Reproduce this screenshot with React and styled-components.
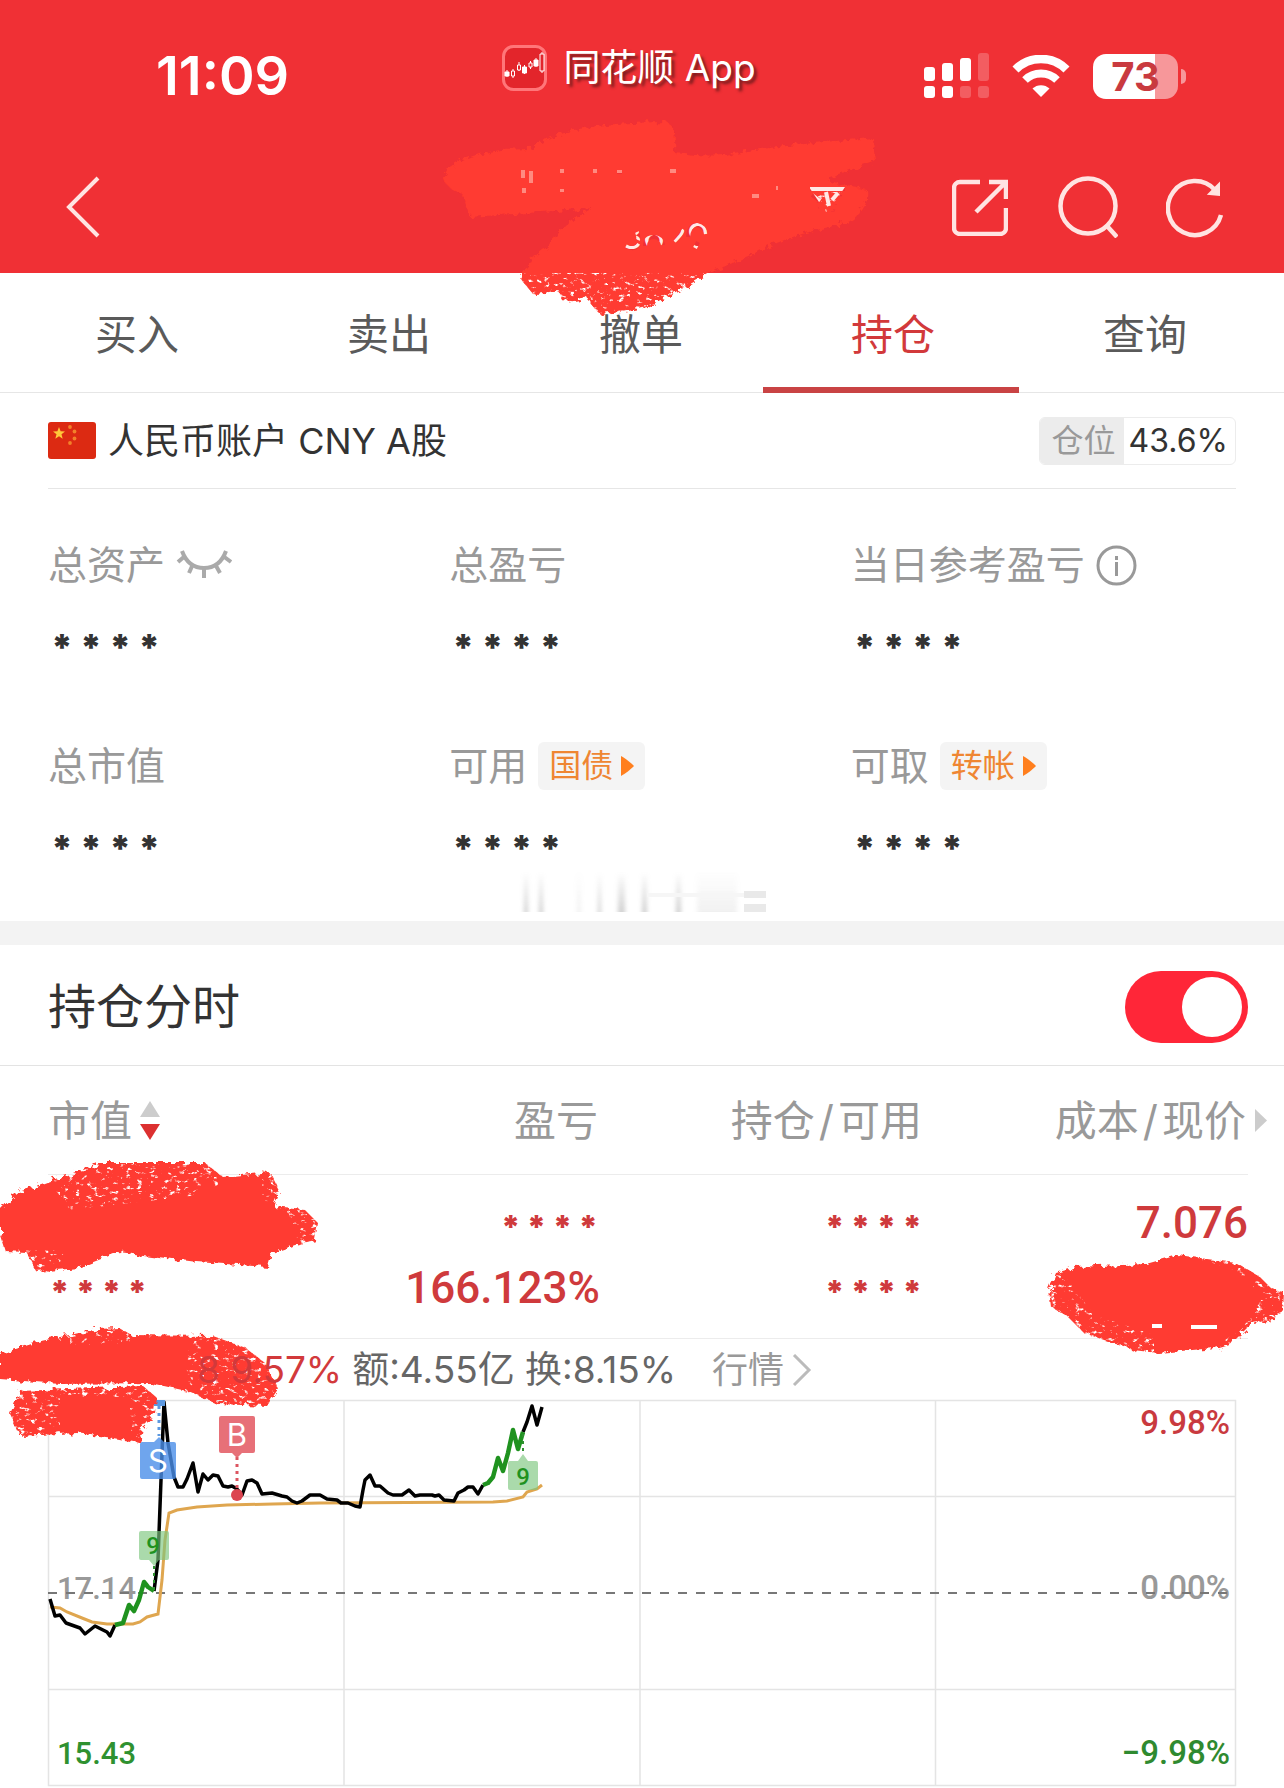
import React from 'react';
import styled, { createGlobalStyle } from 'styled-components';

const GlobalStyle = createGlobalStyle`
  * {
    box-sizing: border-box;
  }

  body {
    margin: 0;
    background: #fff;
    color: #333;
    font-family: Inter, 'Noto Sans CJK SC', sans-serif;
    overflow-x: hidden;
  }

  button {
    margin: 0;
    padding: 0;
    border: 0;
    background: none;
    color: inherit;
    font: inherit;
    cursor: pointer;
  }

  svg {
    display: block;
    flex: none;
  }
`;

const Page = styled.div`
  position: relative;
  width: 100%;
  overflow: hidden;
`;

const Header = styled.header`
  position: relative;
  background: #f03035;
  color: #fff;
`;

const StatusBar = styled.div`
  display: grid;
  grid-template-columns: 1fr auto 1fr;
  align-items: center;
  height: 152px;
  padding: 0 98px;
`;

const Time = styled.span`
  padding-left: 58px;
  font-size: 54px;
  font-weight: 600;
  line-height: 64px;
`;

const AppName = styled.span`
  display: flex;
  align-items: center;
  gap: 16px;
  padding: 0 26px 16px 0;
  font-size: 37px;
  line-height: 48px;
  text-shadow: 3px 3px 3px rgba(70, 20, 20, 0.7);
`;

const StatusIcons = styled.span`
  display: flex;
  align-items: center;
  justify-content: flex-end;
  gap: 23px;
`;

const Battery = styled.span`
  position: relative;
  width: 85px;
  height: 45px;
  margin-right: 8px;
  border-radius: 13px;
  background: linear-gradient(90deg, #fff 73%, #f7979a 73%);
  color: #c93a3f;
  font-size: 40px;
  font-weight: 700;
  line-height: 45px;
  text-align: center;

  &::after {
    content: '';
    position: absolute;
    top: 15px;
    right: -8px;
    width: 5px;
    height: 15px;
    border-radius: 0 5px 5px 0;
    background: #f7979a;
  }
`;

const NavBar = styled.div`
  display: flex;
  align-items: center;
  justify-content: space-between;
  height: 121px;
  padding: 0 60px 12px;
`;

const NavActions = styled.div`
  display: flex;
  align-items: center;
  gap: 48px;
`;

const Tabs = styled.nav`
  display: flex;
  height: 120px;
  padding: 0 13px 0 11px;
  border-bottom: 1px solid #e6e6e6;
`;

const Tab = styled.button`
  position: relative;
  flex: 1;
  padding-top: 4px;
  color: ${(props) => (props.$active ? '#d2393b' : '#5a5a5a')};
  font-size: 42px;
  line-height: 60px;

  &::after {
    content: '';
    position: absolute;
    right: 0;
    bottom: -1px;
    left: -4px;
    height: 6px;
    background: ${(props) => (props.$active ? '#c94344' : 'none')};
  }
`;

const AccountRow = styled.div`
  display: flex;
  align-items: center;
  gap: 12px;
  height: 96px;
  margin: 0 48px;
  border-bottom: 1px solid #e6e6e6;
  font-size: 36px;
  line-height: 48px;
`;

const Position = styled.span`
  display: flex;
  margin-left: auto;
  overflow: hidden;
  border: 1px solid #ececec;
  border-radius: 6px;
  font-size: 32px;
  line-height: 46px;
`;

const PositionLabel = styled.span`
  padding: 0 8px 0 12px;
  background: #ececec;
  color: #999;
`;

const PositionValue = styled.span`
  padding: 0 7px 0 5px;
`;

const Summary = styled.dl`
  display: grid;
  grid-template-columns: repeat(3, 1fr);
  row-gap: 48px;
  margin: 0;
  padding: 52px 32px 26px 48px;
`;

const SummaryItem = styled.div`
  height: 153px;
`;

const SummaryLabel = styled.dt`
  display: flex;
  align-items: center;
  gap: 11px;
  height: 48px;
  color: #999;
  font-size: 39px;
  line-height: 48px;
  white-space: nowrap;
`;

const SummaryValue = styled.dd`
  margin: 30px 0 0 3px;
  color: #333;
  font-size: 36px;
  font-weight: 900;
  line-height: 56px;
`;

const Shortcut = styled.button`
  display: flex;
  align-items: center;
  gap: 8px;
  height: 48px;
  padding: 0 11px;
  border-radius: 6px;
  background: #f4f4f4;
  color: #ef8632;
  font-size: 32px;
`;

const Ghost = styled.svg`
  position: absolute;
  top: 872px;
  left: calc(50% - 125px);
`;

const Divider = styled.div`
  height: 24px;
  background: #f3f3f3;
`;

const SectionHead = styled.label`
  display: flex;
  align-items: center;
  justify-content: space-between;
  height: 121px;
  padding: 3px 36px 0 48px;
  border-bottom: 1px solid #e3e3e3;
  font-size: 48px;
  line-height: 60px;
`;

const Switch = styled.input`
  appearance: none;
  position: relative;
  width: 123px;
  height: 72px;
  margin: 0;
  border-radius: 36px;
  background: #ff2638;

  &::after {
    content: '';
    position: absolute;
    top: 6px;
    right: 6px;
    width: 60px;
    height: 60px;
    border-radius: 50%;
    background: #fff;
  }
`;

const Holdings = styled.section`
  position: relative;
  padding: 0 36px 0 48px;
`;

const Table = styled.table`
  width: 100%;
  table-layout: fixed;
  border-collapse: collapse;
`;

const Th = styled.th`
  position: relative;
  width: ${(props) => props.$width};
  height: 108px;
  padding: 3px 2px 0 0;
  border-bottom: 1px solid #ececec;
  color: #999;
  font-size: 42px;
  font-weight: 400;
  line-height: 60px;
  text-align: ${(props) => props.$align || 'right'};
  white-space: nowrap;
`;

const Slash = styled.span`
  margin: 0 4px;
`;

const SortButton = styled.button`
  display: flex;
  align-items: center;
  gap: 8px;
`;

const MoreArrow = styled.svg`
  position: absolute;
  top: 43px;
  right: -19px;
`;

const Td = styled.td`
  height: ${(props) => (props.$last ? 88 : 76)}px;
  padding: ${(props) => (props.$last ? '0 0 12px' : '20px 0 0')};
  border-bottom: ${(props) => (props.$last ? '1px solid #ececec' : 'none')};
  color: #cf3a3c;
  font-family: Roboto, sans-serif;
  font-size: 44px;
  font-weight: 500;
  line-height: 56px;
  text-align: ${(props) => props.$align || 'right'};
`;

const Masked = styled.span`
  display: block;
  padding: 8px 2px 0;
  font-family: Inter, sans-serif;
  font-size: 32px;
  font-weight: 900;
  line-height: 48px;
`;

const Quote = styled.div`
  display: flex;
  align-items: center;
  gap: 10px;
  height: 61px;
  padding-left: 149px;
  color: #666;
  font-size: 37px;
  line-height: 48px;
  white-space: nowrap;
`;

const Rise = styled.span`
  position: relative;
  z-index: 2;
  color: #d2393b;
`;

const QuoteLink = styled.a`
  display: flex;
  align-items: center;
  gap: 8px;
  margin-left: 26px;
  color: #999;
  font-size: 36px;
  text-decoration: none;
`;

const Chart = styled.svg`
  width: calc(100% - 12px);
  height: auto;
  overflow: visible;
  font-family: Roboto, sans-serif;
`;

const Brush = styled.svg`
  position: absolute;
  top: ${(props) => props.$top}px;
  left: ${(props) => props.$left || 'auto'};
  right: ${(props) => props.$right || 'auto'};
  z-index: 1;
  overflow: visible;
  pointer-events: none;
`;

const MASK = '* * * *';

const Scribble = ({
  id,
  width,
  height,
  top,
  left,
  right,
  d,
  specks,
  holes,
  children,
}) => (
  <Brush
    $top={top}
    $left={left}
    $right={right}
    width={width}
    height={height}
    viewBox={`0 0 ${width} ${height}`}
    aria-hidden="true"
  >
    <defs>
      <filter id={`${id}-edge`} x="-5%" y="-10%" width="110%" height="120%">
        <feTurbulence type="fractalNoise" baseFrequency="0.16" numOctaves="3" />
        <feDisplacementMap in="SourceGraphic" scale="9" />
      </filter>
      <filter id={`${id}-grain`}>
        <feTurbulence
          type="fractalNoise"
          baseFrequency="0.16 0.26"
          numOctaves="4"
          seed="4"
        />
        <feColorMatrix values="0 0 0 0 0  0 0 0 0 0  0 0 0 0 0  0 0 0 6 -3.6" />
        <feComposite in2="SourceGraphic" operator="in" />
      </filter>
      <mask id={`${id}-mask`} maskUnits="userSpaceOnUse" x="-20" y="-20" width={width + 40} height={height + 40}>
        <rect x="-20" y="-20" width={width + 40} height={height + 40} fill="#fff" />
        <path d={specks} filter={`url(#${id}-grain)`} />
        {holes && <path d={holes} fill="none" stroke="#000" strokeWidth="4" />}
      </mask>
    </defs>
    {children}
    <g mask={`url(#${id}-mask)`}>
      <path d={d} fill="#ff3a30" filter={`url(#${id}-edge)`} />
    </g>
  </Brush>
);

const LogoIcon = () => (
  <svg width="45" height="46" viewBox="0 0 45 46" fill="none">
    <rect x="1.5" y="1.5" width="42" height="43" rx="10" fill="#e3252b" stroke="#ff7679" strokeWidth="3" />
    <g stroke="#fff" strokeWidth="1">
      <path d="M5 25v7M11 24v9M17 17v9M22.500 20v9M28.500 16v8M34 13v9M40 7v21" />
      <path fill="#fff" d="M3 27h4v4H3zM20.500 22h4v6h-4zM32 15h4v6h-4z" />
      <path fill="#e3252b" d="M9.500 26h3v5h-3zM15.500 20h3v5h-3zM27 18h3v4h-3zM38 9h4v17h-4z" />
    </g>
  </svg>
);

const SignalIcon = () => (
  <svg width="65" height="46" viewBox="0 0 65 46" fill="#fff">
    <rect y="14" width="11" height="14" rx="3" />
    <rect x="18" y="10" width="11" height="18" rx="3" />
    <rect x="36" y="5" width="11" height="23" rx="3" />
    <rect x="54" width="11" height="28" rx="3" opacity=".22" />
    <rect y="33" width="11" height="12" rx="3" />
    <rect x="18" y="33" width="11" height="12" rx="3" />
    <rect x="36" y="33" width="11" height="12" rx="3" opacity=".22" />
    <rect x="54" y="33" width="11" height="12" rx="3" opacity=".22" />
  </svg>
);

const WifiIcon = () => (
  <svg width="58" height="43" viewBox="0 0 58 43" fill="none">
    <path d="M3.500 14.500a36 36 0 0 1 51 0" stroke="#fff" strokeWidth="8.500" />
    <path d="M13 25a23 23 0 0 1 32 0" stroke="#fff" strokeWidth="8" />
    <path d="M29 42l-8.500-8.500a12.500 12.500 0 0 1 17 0z" fill="#fff" />
  </svg>
);

const BackIcon = () => (
  <svg width="46" height="62" viewBox="0 0 46 62" fill="none" stroke="#ffe4e2" strokeWidth="4">
    <path d="M38 2L9 31l29 29" />
  </svg>
);

const ShareIcon = () => (
  <svg width="56" height="58" viewBox="0 0 56 58" fill="none" stroke="#ffe4e2" strokeWidth="4.500">
    <path d="M28 4H8a6 6 0 0 0-6 6v40a6 6 0 0 0 6 6h40a6 6 0 0 0 6-6V30" />
    <path d="M37 4h17v17M54 4L24 34" />
  </svg>
);

const SearchIcon = () => (
  <svg width="62" height="62" viewBox="0 0 62 62" fill="none" stroke="#ffe4e2" strokeWidth="4.500">
    <circle cx="32" cy="30" r="27.500" />
    <path d="M51 50l10 11" />
  </svg>
);

const RefreshIcon = () => (
  <svg width="58" height="62" viewBox="0 0 58 62" fill="none" stroke="#ffe4e2" strokeWidth="4.500">
    <path d="M55 39a27 27 0 1 1-6-25" />
    <path d="M53 8v11l-10-1z" fill="#ffe4e2" strokeWidth="2" />
  </svg>
);

const FlagIcon = () => (
  <svg width="48" height="37" viewBox="0 0 48 37">
    <rect width="48" height="37" rx="3" fill="#dc2a12" />
    <path fill="#ffc83a" d="M11 5l1.600 4.300 4.400.200-3.500 2.800 1.200 4.400-3.700-2.500-3.700 2.500 1.200-4.400L5 9.500l4.400-.200z" />
    <g fill="#f2812a">
      <circle cx="22" cy="5" r="1.900" />
      <circle cx="26.500" cy="9.500" r="1.900" />
      <circle cx="26.500" cy="16.500" r="1.900" />
      <circle cx="22" cy="21" r="1.900" />
    </g>
  </svg>
);

const ClosedEyeIcon = () => (
  <svg width="56" height="34" viewBox="0 0 56 34" fill="none" stroke="#aaa" strokeWidth="4">
    <path d="M6 3c4 11 12 17 22 17S46 14 50 3" />
    <path d="M9 8l-7 6M17 16l-4 9M28 20v10M39 16l5 9M47 8l8 6" />
  </svg>
);

const InfoIcon = () => (
  <svg width="41" height="41" viewBox="0 0 41 41" fill="none" stroke="#999" strokeWidth="3">
    <circle cx="20.500" cy="20.500" r="18.500" />
    <path d="M20.500 17v14M20.500 11v4" />
  </svg>
);

const PlayIcon = () => (
  <svg width="13" height="20" viewBox="0 0 13 20" fill="#ff7f1e">
    <path d="M0 0c4 2 10 7 13 10-3 3-9 8-13 10z" />
  </svg>
);

const SortIcon = () => (
  <svg width="20" height="40" viewBox="0 0 20 40">
    <path d="M10 0l10 16H0z" fill="#ccc" />
    <path d="M10 39l10-16H0z" fill="#dc3030" />
  </svg>
);

const summary = [
  { label: '总资产', extra: <ClosedEyeIcon /> },
  { label: '总盈亏' },
  { label: '当日参考盈亏', extra: <InfoIcon /> },
  { label: '总市值' },
  { label: '可用', link: '国债' },
  { label: '可取', link: '转帐' },
];

const tabs = ['买入', '卖出', '撤单', '持仓', '查询'];

const priceLine = [
  '2,199 7,216 12,215 18,223 32,228 37,234 47,226 59,232 62,236 67,225',
  '106,191 110,160 113,80 116,2 120,43 126,77 130,87 135,87 139,79 145,63 150,92 155,74 160,80 165,75 170,76 175,86 180,87 184,86 189,89 194,95 199,81 204,80 209,83 214,94 224,93 234,96 239,97 244,101 249,103 254,101 262,95 272,95 279,99 289,100 293,103 300,103 307,106 312,107 315,90 317,80 322,75 327,86 332,86 340,93 345,95 354,95 361,90 367,96 372,95 384,95 387,96 391,95 396,100 406,101 410,93 416,90 420,87 425,87 430,94 435,85',
  '475,32 479,22 484,6 489,25 494,7',
];

const nineLine = [
  '67,225 75,223 81,205 86,211 91,200 96,182 100,187 106,191',
  '435,85 440,83 445,77 450,58 455,71 460,53 465,30 470,49 475,32',
];

const averageLine =
  '2,207 12,208 19,212 34,218 44,222 59,224 85,224 92,222 99,217 110,214 114,180 117,140 121,113 129,110 149,107 179,105 225,104 272,103 445,102 459,101 475,97 479,92 489,89 494,85';

const IntradayChart = () => (
  <Chart viewBox="0 0 1188 388" role="img" aria-label="持仓分时">
    <path
      d="M.5.500h1187v385H.500zM0 96.500h1188M0 289.500h1188M296 0v385M592 0v385M887.500 0v385"
      fill="none"
      stroke="#e4e4e4"
      strokeWidth="1.500"
    />
    <g fontSize="31" fontWeight="500">
      <text x="9" y="199" fill="#999">17.14</text>
      <text x="9" y="364" fill="#2f9130">15.43</text>
    </g>
    <g fontSize="33" fontWeight="500" textAnchor="end">
      <text x="1182" y="34" fill="#c93a3f">9.98%</text>
      <text x="1182" y="199" fill="#999">0.00%</text>
      <text x="1182" y="364" fill="#2f8a30">−9.98%</text>
    </g>
    <path d="M0 193h1182" stroke="#777" strokeWidth="2" strokeDasharray="9 9" />
    <polyline points={averageLine} fill="none" stroke="#dfa64f" strokeWidth="3" />
    <g fill="none" stroke="#000" strokeWidth="3.500" strokeLinejoin="round">
      {priceLine.map((points) => (
        <polyline key={points} points={points} />
      ))}
    </g>
    <g fill="none" stroke="#1f921f" strokeWidth="4.500" strokeLinejoin="round">
      {nineLine.map((points) => (
        <polyline key={points} points={points} />
      ))}
    </g>
    <g fill="none" strokeWidth="3" strokeDasharray="3 4">
      <path d="M111 6v30" stroke="#5c98e0" />
      <path d="M189 57v32" stroke="#dc5560" />
      <path d="M106 166v24M475 34v20" stroke="#2f9130" strokeWidth="2" />
    </g>
    <rect x="106" width="11" height="6" fill="#5c98e0" />
    <circle cx="189" cy="95" r="6" fill="#dc4450" />
    <path d="M95 42h11l5-5 5 5h10q2 0 2 2v33q0 2-2 2H94q-2 0-2-2V44q0-2 2-2z" fill="#4b8fe8" fillOpacity=".8" />
    <path d="M173 16h32q2 0 2 2v33q0 2-2 2h-11l-5 5-5-5h-11q-2 0-2-2V18q0-2 2-2z" fill="#e5646d" fillOpacity=".92" />
    <g fill="#7cc67e" fillOpacity=".65">
      <path d="M93 131h26q2 0 2 2v25q0 2-2 2h-8l-5 6-5-6h-8q-2 0-2-2v-25q0-2 2-2z" />
      <path d="M462 61h8l5-7 5 7h8q2 0 2 2v25q0 2-2 2h-26q-2 0-2-2V63q0-2 2-2z" />
    </g>
    <g textAnchor="middle" fontFamily="Inter">
      <text x="110" y="72" fontSize="31" fill="#fff">S</text>
      <text x="189" y="46" fontSize="31" fill="#fff">B</text>
      <g fontSize="24" fontFamily="Roboto" fontWeight="500" fill="#1f921f">
        <text x="105" y="154">9</text>
        <text x="475" y="85">9</text>
      </g>
    </g>
  </Chart>
);

const App = () => (
  <Page>
    <GlobalStyle />
    <Header>
      <StatusBar>
        <Time>11:09</Time>
        <AppName>
          <LogoIcon />
          同花顺 App
        </AppName>
        <StatusIcons>
          <SignalIcon />
          <WifiIcon />
          <Battery>73</Battery>
        </StatusIcons>
      </StatusBar>
      <NavBar>
        <button type="button" aria-label="返回">
          <BackIcon />
        </button>
        <NavActions>
          <button type="button" aria-label="分享">
            <ShareIcon />
          </button>
          <button type="button" aria-label="搜索">
            <SearchIcon />
          </button>
          <button type="button" aria-label="刷新">
            <RefreshIcon />
          </button>
        </NavActions>
      </NavBar>
      <Scribble
        id="account"
        width={500}
        height={206}
        top={110}
        left="calc(50% - 242px)"
        d="M47 60Q57 47 100 40L127 39Q140 30 167 22 200 12 267 12 277 17 275 43 320 48 333 43 400 33 473 28L475 50Q453 60 430 67V72L467 80Q470 100 447 113 400 123 377 133 333 153 310 163 267 187 247 197 230 202 200 204 192 197 187 187 173 193 163 191L157 180Q143 184 133 184L119 167Q127 150 147 137 167 110 193 98 133 103 70 107L62 83Q47 80 43 67Z"
        specks="M110 163h200l-60 36-50 10-90-20zM412 82h32l-10 20h-14z"
        holes="M410 79h35M412 85l8 6M426 82l3 14M438 83l-6 7M226 136q9 5 13-2M237 122q2 5 1 8M245 136q0-9 9-9 8 1 9 8M275 132l9-12M288 127q1-12 9-12 8 2 9 9M295 138l3-6M123 60v8M131 61v12M124 78v5M160 61h4M162 79v3M193 61h4M217 62h5M270 61h6M352 86h7M376 78h2"
      >
        <path d="M409 77h36l-18 27z" fill="#ffe9e6" />
        <text x="265" y="139" fontSize="36" fill="#ffe9e6" textAnchor="middle">
          3629
        </text>
        <path d="M120 59h18v25h-18zM156 59h10v25h-10zM190 59h90v4h-90zM350 76h30v12h-30z" fill="#ff8a80" />
      </Scribble>
    </Header>

    <Tabs>
      {tabs.map((tab) => (
        <Tab key={tab} type="button" $active={tab === '持仓'}>
          {tab}
        </Tab>
      ))}
    </Tabs>

    <AccountRow>
      <FlagIcon />
      <span>人民币账户 CNY A股</span>
      <Position>
        <PositionLabel>仓位</PositionLabel>
        <PositionValue>43.6%</PositionValue>
      </Position>
    </AccountRow>

    <Summary>
      {summary.map((item) => (
        <SummaryItem key={item.label}>
          <SummaryLabel>
            {item.label}
            {item.extra}
            {item.link && (
              <Shortcut type="button">
                {item.link}
                <PlayIcon />
              </Shortcut>
            )}
          </SummaryLabel>
          <SummaryValue>{MASK}</SummaryValue>
        </SummaryItem>
      ))}
    </Summary>

    <Ghost width="250" height="42" viewBox="0 0 250 42" aria-hidden="true">
      <defs>
        <linearGradient id="ghost-fade" x1="0" y1="0" x2="0" y2="1">
          <stop offset="0" stopColor="#aaa" stopOpacity="0" />
          <stop offset="1" stopColor="#aaa" stopOpacity=".55" />
        </linearGradient>
        <filter id="ghost-blur">
          <feGaussianBlur stdDeviation="2 0" />
        </filter>
      </defs>
      <g fill="url(#ghost-fade)" filter="url(#ghost-blur)">
        <path d="M7 0h4v40H7zM22 0h4v40h-4zM81 0h3v40h-3zM101 0h7v40h-7zM125 0h5v40h-5zM159 0h5v40h-5z" />
        <path d="M60 0h4v40h-4zM180 0h40v40h-40z" opacity=".3" />
      </g>
      <path d="M227 19h22v7h-22zM227 32h22v8h-22z" fill="#e9e9e9" />
      <path d="M130 21h97v4h-97z" fill="#f6f6f6" />
    </Ghost>

    <Divider />

    <SectionHead>
      持仓分时
      <Switch type="checkbox" role="switch" defaultChecked />
    </SectionHead>

    <Holdings>
      <Table>
        <thead>
          <tr>
            <Th $width="20%" $align="left">
              <SortButton type="button">
                市值
                <SortIcon />
              </SortButton>
            </Th>
            <Th $width="26%">盈亏</Th>
            <Th $width="27%">
              持仓<Slash>/</Slash>可用
            </Th>
            <Th $width="27%">
              成本<Slash>/</Slash>现价
              <MoreArrow width="12" height="23" viewBox="0 0 12 23" fill="#ccc">
                <path d="M0 0l12 11.500L0 23z" />
              </MoreArrow>
            </Th>
          </tr>
        </thead>
        <tbody>
          <tr>
            <Td $align="left" />
            <Td>
              <Masked>{MASK}</Masked>
            </Td>
            <Td>
              <Masked>{MASK}</Masked>
            </Td>
            <Td>7.076</Td>
          </tr>
          <tr>
            <Td $last $align="left">
              <Masked>{MASK}</Masked>
            </Td>
            <Td $last>166.123%</Td>
            <Td $last>
              <Masked>{MASK}</Masked>
            </Td>
            <Td $last />
          </tr>
        </tbody>
      </Table>

      <Quote>
        <Rise>8 9.57%</Rise>
        <span>额:4.55亿 换:8.15%</span>
        <QuoteLink href="#quote">
          行情
          <svg width="20" height="32" viewBox="0 0 20 32" fill="none" stroke="#bbb" strokeWidth="3">
            <path d="M2 1l15 15L2 31" />
          </svg>
        </QuoteLink>
      </Quote>

      <IntradayChart />

      <Scribble
        id="name"
        width={320}
        height={116}
        top={94}
        left="0"
        d="M0 50L16 33 61 17 102 3H205L223 17 270 12 280 32 274 47 305 50 318 63 315 80 295 85 272 93 268 107 197 102Q150 96 119 92L78 108 37 112 27 93 6 92 0 73Z"
        specks="M50 22L100 4h110l10 20-30 12-120 14zM262 8h60v90h-20l-10-40-30-20zM25 90h40l-10 24h-30z"
      />
      <Scribble
        id="price"
        width={240}
        height={108}
        top={184}
        right="0"
        d="M5 40L12 23 32 17 102 14 134 5 192 13 216 27 229 40 240 42 239 60 231 70 208 73 188 93 171 98 114 103 89 100 40 83 24 67 7 57Z"
        specks="M0 25h20l30 40 60 20v20H60L0 60zM130 0h70l40 40v40l-50 26h-30l40-30 20-30-30-26z"
        holes="M147 77h26M108 76h10"
      />
      <Scribble
        id="quote"
        width={284}
        height={126}
        top={257}
        left="0"
        d="M0 31L41 18 98 6 119 5 131 12 213 13 246 25 266 41 278 66 267 83 217 81 187 68 150 60 60 61 0 56ZM20 68L143 63 157 75 155 90 143 105 140 120 113 115 77 110 20 113 10 91Z"
        specks="M190 8h30l66 40v40h-60l-40-30zM70 8h60v14H70zM0 64h60v50H0zM60 66h90v8H60zM130 66h30v56h-30z"
      />
    </Holdings>
  </Page>
);

export default App;
